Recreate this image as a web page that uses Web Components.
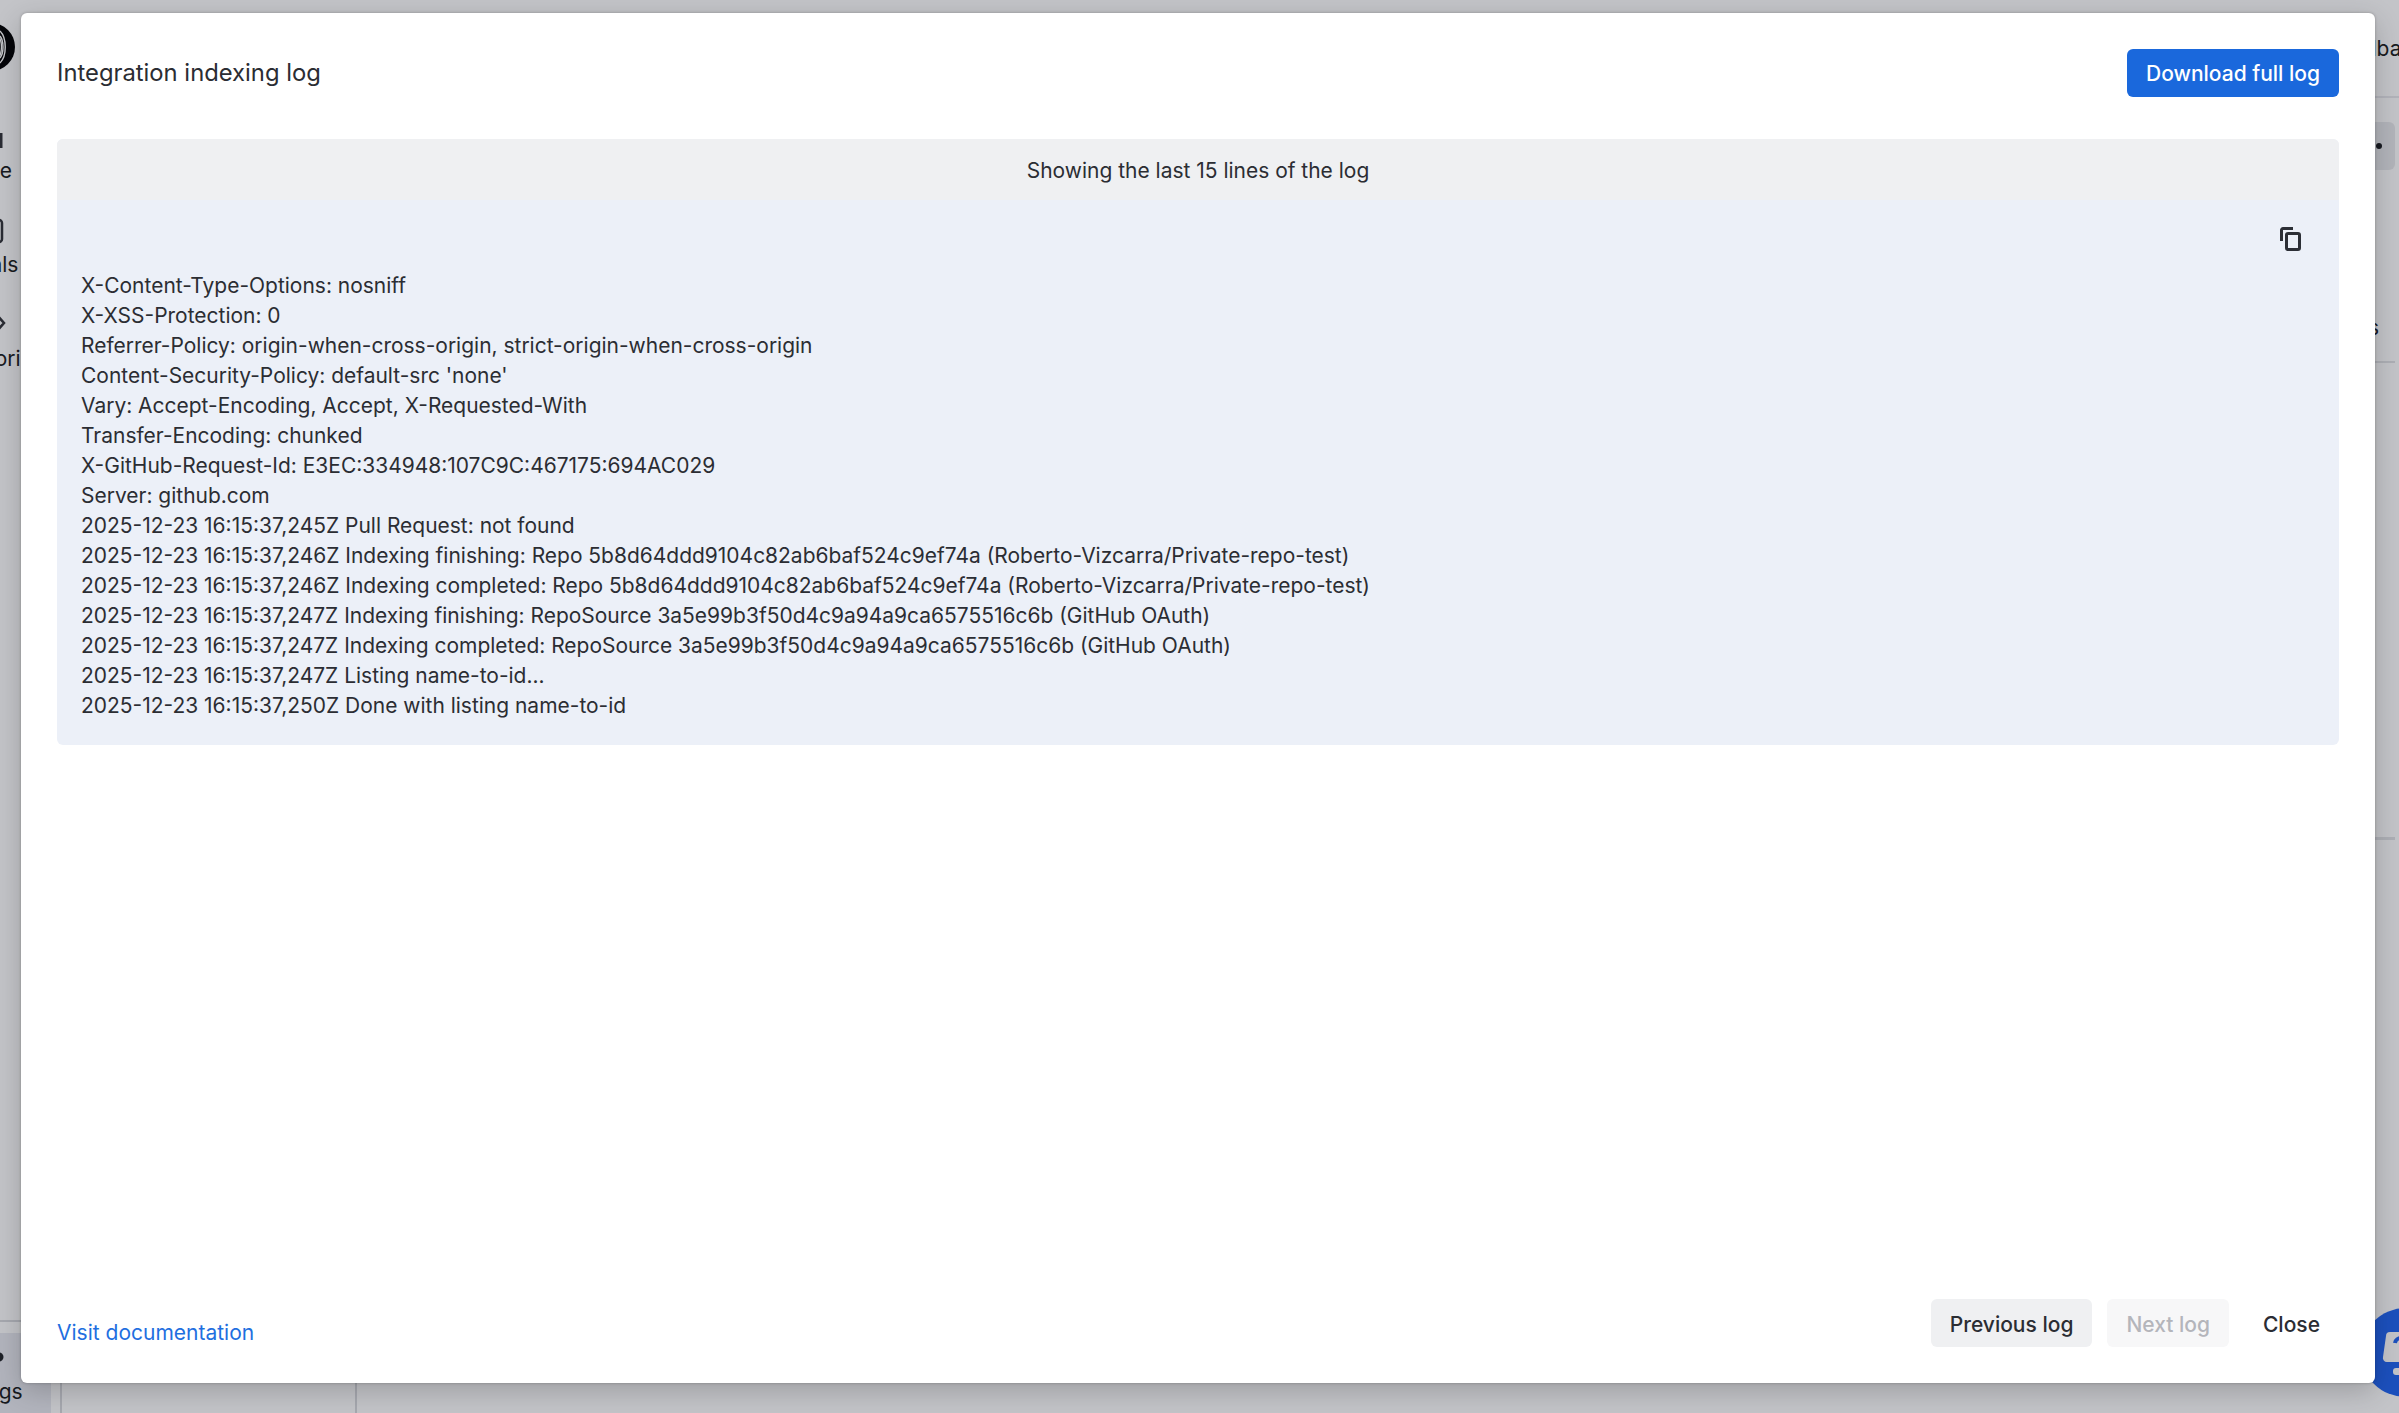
<!DOCTYPE html>
<html lang="en">
<head>
<meta charset="utf-8">
<title>Integration indexing log</title>
<style>
  html, body { margin: 0; height: 100%; overflow: hidden; background: #fff; }
  body { font-family: Inter, "Liberation Sans", sans-serif; color: #2b2d33; }
</style>
</head>
<body>

<app-shell>
  <side-item slot="nav" label="Home" icon="home"></side-item>
  <side-item slot="nav" label="Signals" icon="signals"></side-item>
  <side-item slot="nav" label="Repositories" icon="code"></side-item>
  <side-item slot="foot" label="Settings" icon="gear" active></side-item>
</app-shell>

<help-fab></help-fab>

<modal-dialog>
  <span slot="title">Integration indexing log</span>
  <ui-button slot="action" variant="primary">Download full log</ui-button>

  <log-viewer caption="Showing the last 15 lines of the log">X-Content-Type-Options: nosniff
X-XSS-Protection: 0
Referrer-Policy: origin-when-cross-origin, strict-origin-when-cross-origin
Content-Security-Policy: default-src 'none'
Vary: Accept-Encoding, Accept, X-Requested-With
Transfer-Encoding: chunked
X-GitHub-Request-Id: E3EC:334948:107C9C:467175:694AC029
Server: github.com
2025-12-23 16:15:37,245Z Pull Request: not found
2025-12-23 16:15:37,246Z Indexing finishing: Repo 5b8d64ddd9104c82ab6baf524c9ef74a (Roberto-Vizcarra/Private-repo-test)
2025-12-23 16:15:37,246Z Indexing completed: Repo 5b8d64ddd9104c82ab6baf524c9ef74a (Roberto-Vizcarra/Private-repo-test)
2025-12-23 16:15:37,247Z Indexing finishing: RepoSource 3a5e99b3f50d4c9a94a9ca6575516c6b (GitHub OAuth)
2025-12-23 16:15:37,247Z Indexing completed: RepoSource 3a5e99b3f50d4c9a94a9ca6575516c6b (GitHub OAuth)
2025-12-23 16:15:37,247Z Listing name-to-id...
2025-12-23 16:15:37,250Z Done with listing name-to-id</log-viewer>

  <a slot="link" href="#">Visit documentation</a>
  <ui-button slot="buttons" variant="secondary">Previous log</ui-button>
  <ui-button slot="buttons" variant="disabled">Next log</ui-button>
  <ui-button slot="buttons" variant="plain">Close</ui-button>
</modal-dialog>

<script>
const ICONS = {
  home: '<path d="M39 15v15" stroke-width="3"/>',
  signals: '<rect x="4" y="8" width="36" height="22" rx="3"/>',
  code: '<path d="M34 8l8 9-8 9" />',
  gear: '<circle cx="37" cy="18" r="4.5" fill="#222428" stroke="none"/>'
};

class SideItem extends HTMLElement {
  connectedCallback() {
    if (this.shadowRoot) return;
    const root = this.attachShadow({ mode: 'open' });
    root.innerHTML = `
      <style>
        :host { display: flex; flex-direction: column; align-items: center; height: 94px; font-size: 21px; line-height: 30px; color: #1a1c20; white-space: nowrap; }
        :host([active]) { height: 80px; box-sizing: border-box; padding-top: 6px; background: #e8eaf0; }
        svg { flex: none; width: 42px; height: 36px; margin-bottom: 2px; fill: none; stroke: #33353a; stroke-width: 2.5; overflow: visible; }
      </style>
      <svg viewBox="0 0 42 36">${ICONS[this.getAttribute('icon')] || ''}</svg>
      <span>${this.getAttribute('label')}</span>`;
  }
}
customElements.define('side-item', SideItem);

// Page underneath the dialog, only its edges stay visible
const shellTemplate = document.createElement('template');
shellTemplate.innerHTML = `
<style>
  :host { display: flex; height: 1413px; width: 2399px; overflow: hidden; }
  #side { flex: none; width: 137px; margin-left: -86px; display: flex; flex-direction: column; }
  #logo { flex: none; align-self: flex-start; width: 48px; height: 48px; margin: 23px 0 47px 53px; }
  #nav { display: flex; flex-direction: column; }
  #foot { margin-top: auto; border-top: 2px solid #d9dade; padding-top: 11px; }
  #rail { flex: none; width: 293px; margin: 97px 0 0 9px; border-left: 2px solid #d9dade; border-right: 2px solid #d9dade; }
  #main { flex: 1; min-width: 0; display: flex; flex-direction: column; margin-right: 4px; }
  #top { flex: none; height: 96px; margin-right: -4px; border-bottom: 2px solid #e8e9ec; display: flex; justify-content: flex-end; align-items: center; overflow: hidden; font-size: 21px; }
  #top span { margin-right: -26px; color: #1a1c20; }
  #tool { flex: none; align-self: flex-end; width: 60px; height: 48px; margin-top: 24px; border-radius: 6px; background: #e9eaec; display: flex; align-items: center; }
  #tool i { display: block; width: 6px; height: 6px; margin-left: 41px; border-radius: 50%; background: #1a1c20; }
  #tab { flex: none; align-self: flex-end; margin: 143px 16px 0 0; height: 48px; font-size: 21px; line-height: 30px; color: #1a1c20; }
  .rule { flex: none; height: 2px; background: #e2e3e6; }
  #rule2 { height: 3px; margin-top: 474px; }
  #scrim { position: absolute; inset: 0; background: rgba(16, 20, 36, .25); }
</style>
<div id="side">
  <svg id="logo" viewBox="0 0 48 48">
    <circle cx="24" cy="24" r="24" fill="#000"/>
    <g fill="none" stroke="#fff" stroke-width="1.4">
      <path d="M33 8c7 7 7 25 0 32"/>
      <path d="M33 13c4 5 4 17 0 22"/>
      <path d="M30 11c6 6 6 20 0 26"/>
    </g>
  </svg>
  <div id="nav"><slot name="nav"></slot></div>
  <div id="foot"><slot name="foot"></slot></div>
</div>
<div id="rail"></div>
<div id="main">
  <div id="top"><span>Feedback</span></div>
  <div id="tool"><i></i></div>
  <div id="tab">Tabs</div>
  <div class="rule"></div>
  <div class="rule" id="rule2"></div>
</div>
<div id="scrim"></div>
`;
class AppShell extends HTMLElement {
  constructor() {
    super();
    this.attachShadow({ mode: 'open' }).appendChild(shellTemplate.content.cloneNode(true));
  }
}
customElements.define('app-shell', AppShell);

class HelpFab extends HTMLElement {
  constructor() {
    super();
    this.attachShadow({ mode: 'open' }).innerHTML = `
      <style>
        :host { position: absolute; left: 2361px; top: 1308px; width: 89px; height: 89px; border-radius: 50%; background: #1c50bd; }
        svg { position: absolute; left: 20px; top: 20px; width: 50px; height: 50px; }
      </style>
      <svg viewBox="0 0 50 50">
        <path d="M9 4h26a6 6 0 0 1 6 6v18a6 6 0 0 1-6 6H6a4 4 0 0 1-4-5L5 8a4 4 0 0 1 4-4z" fill="#c3c4c8"/>
        <path d="M14 15a6 6 0 1 1 7 7v4" fill="none" stroke="#1c50bd" stroke-width="4"/>
        <rect x="12" y="40" width="14" height="7" rx="3" fill="#c3c4c8"/>
      </svg>`;
  }
}
customElements.define('help-fab', HelpFab);

const modalTemplate = document.createElement('template');
modalTemplate.innerHTML = `
<style>
  :host { position: absolute; left: 21px; top: 13px; width: 2354px; height: 1370px; box-sizing: border-box; padding: 36px; display: flex; flex-direction: column; background: #fff; border-radius: 6px; box-shadow: 0 8px 28px rgba(0, 0, 0, .2), 0 0 3px rgba(0, 0, 0, .25); }
  header { flex: none; display: flex; justify-content: space-between; align-items: center; margin-bottom: 42px; font-size: 23.8px; line-height: 36px; color: #2b2d33; }
  footer { flex: none; margin-top: auto; display: flex; justify-content: space-between; align-items: flex-end; }
  #buttons { display: flex; gap: 15px; }
  ::slotted(a) { font-size: 21px; line-height: 30px; color: #1f6fe0; text-decoration: none; margin-bottom: -1px; }
</style>
<header><slot name="title"></slot><slot name="action"></slot></header>
<slot></slot>
<footer>
  <slot name="link"></slot>
  <div id="buttons"><slot name="buttons"></slot></div>
</footer>
`;
class ModalDialog extends HTMLElement {
  constructor() {
    super();
    this.attachShadow({ mode: 'open' }).appendChild(modalTemplate.content.cloneNode(true));
  }
}
customElements.define('modal-dialog', ModalDialog);

const buttonTemplate = document.createElement('template');
buttonTemplate.innerHTML = `
<style>
  :host { display: inline-flex; align-items: center; height: 48px; box-sizing: border-box; padding: 2px 19px 0; border-radius: 6px; font-size: 21px; font-weight: 500; white-space: nowrap; color: #2b2d33; }
  :host([variant="primary"]) { background: #1a68dc; color: #fff; }
  :host([variant="secondary"]) { background: #eff0f2; }
  :host([variant="disabled"]) { background: #f7f7f8; color: #b4b5bb; }
</style>
<slot></slot>
`;
class UiButton extends HTMLElement {
  constructor() {
    super();
    this.attachShadow({ mode: 'open' }).appendChild(buttonTemplate.content.cloneNode(true));
  }
}
customElements.define('ui-button', UiButton);

const logTemplate = document.createElement('template');
logTemplate.innerHTML = `
<style>
  :host { display: block; flex: none; border-radius: 6px; overflow: hidden; background: #ecf0f8; font-size: 20.97px; line-height: 30px; color: #2b2d33; }
  #caption { height: 61px; box-sizing: border-box; padding-top: 2px; display: flex; align-items: center; justify-content: center; background: #eff0f2; }
  #tools { height: 71px; display: flex; justify-content: flex-end; align-items: flex-start; padding: 27px 38px 0 0; box-sizing: border-box; }
  #tools svg { width: 21px; height: 24px; fill: none; stroke: #2c2f36; stroke-width: 3; }
  #lines { margin: 0; padding: 0 24px 24px; font: inherit; white-space: pre-wrap; }
</style>
<div id="caption"></div>
<div id="tools">
  <svg viewBox="0 0 21 24">
    <path d="M1.5 14V3a1.5 1.5 0 0 1 1.5-1.5h10"/>
    <rect x="6.5" y="6.5" width="13" height="16" rx="1.5"/>
  </svg>
</div>
<pre id="lines"><slot></slot></pre>
`;
class LogViewer extends HTMLElement {
  constructor() {
    super();
    this.attachShadow({ mode: 'open' }).appendChild(logTemplate.content.cloneNode(true));
  }
  connectedCallback() {
    this.shadowRoot.querySelector('#caption').textContent = this.getAttribute('caption');
  }
}
customElements.define('log-viewer', LogViewer);
</script>
</body>
</html>
